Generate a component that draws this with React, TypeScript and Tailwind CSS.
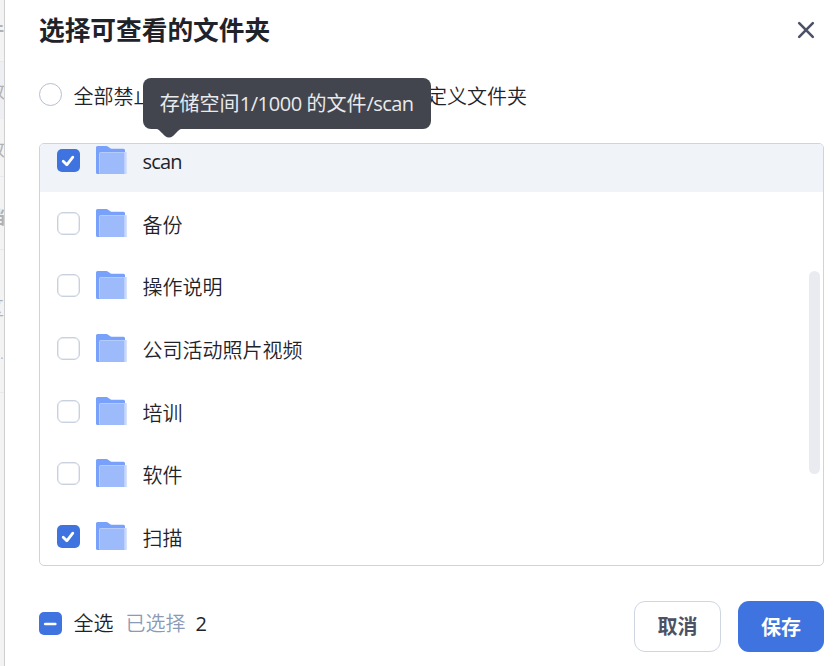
import React from 'react';

const FOLDERS = [
  { name: 'scan', checked: true, active: true },
  { name: '备份', checked: false },
  { name: '操作说明', checked: false },
  { name: '公司活动照片视频', checked: false },
  { name: '培训', checked: false },
  { name: '软件', checked: false },
  { name: '扫描', checked: true },
];

function Checkbox({ state }: { state: 'on' | 'off' | 'partial' }) {
  if (state === 'off') {
    return <span className="size-[23px] shrink-0 rounded-[6px] border border-[#c9d1de] bg-white shadow-[inset_0_0_0_0.5px_#d3dae5]" />;
  }
  return (
    <span className="flex size-[23px] shrink-0 items-center justify-center rounded-[5px] bg-[#3f73e0]">
      <svg width="23" height="23" viewBox="0 0 23 23" fill="none" stroke="#fff" strokeLinecap="round">
        {state === 'on' ? (
          <path d="M6.2 12.2L9.8 15.8L15.8 8.2" strokeWidth="2.8" strokeLinejoin="round" />
        ) : (
          <path d="M6.2 12H16.3" strokeWidth="2.6" />
        )}
      </svg>
    </span>
  );
}

function FolderIcon() {
  return (
    <svg width="32" height="29" viewBox="0 0 32 29" className="block shrink-0">
      <path d="M0 1.5A1.5 1.5 0 0 1 1.5 0H10.5c1.800 0 3 2.700 5 2.700H27.500a1.500 1.500 0 0 1 1.500 1.500V28H1.500A1.500 1.500 0 0 1 0 26.500Z" fill="#77a1fa" />
      <path d="M3 7.500A1.500 1.500 0 0 1 4.500 6H29V28H3Z" fill="#9dbafb" />
      <path d="M3.500 27V7.500a1 1 0 0 1 1-1H29" fill="none" stroke="#b5cbfc" />
      <path d="M28 6H29.500A1.500 1.500 0 0 1 31 7.500V26.500a1.500 1.500 0 0 1-1.500 1.500H28Z" fill="#bdd0fd" />
      <path d="M29.500 6A1.500 1.500 0 0 1 31 7.500V26.500a1.500 1.500 0 0 1-1.500 1.500Z" fill="#d5e1fe" />
    </svg>
  );
}

export default function App() {
  return (
    <div className="relative flex h-[666px] w-[836px] overflow-hidden bg-[#f3f3f4] font-['Open_Sans','Noto_Sans_CJK_SC',sans-serif] text-[20px] font-[350] text-[#1f2329]">
      {/* Dimmed page behind the dialog */}
      <div className="relative w-[5px] shrink-0 overflow-hidden border-r border-[#cfcfd0] text-[18px] leading-none text-[#b0b1b4]">
        <div className="absolute top-[61px] h-[58px] w-[5px] border-t border-[#e6e9f0] bg-[#eeeff2]" />
        <div className="absolute top-[176px] h-px w-[5px] bg-[#e6e9f0]" />
        <div className="absolute top-[249px] h-px w-[5px] bg-[#e6e9f0]" />
        <div className="absolute top-[392px] h-px w-[5px] bg-[#e6e9f0]" />
        <span className="absolute top-[21px] right-0 font-bold">件</span>
        <span className="absolute top-[82px] right-[-1px] font-normal">改</span>
        <span className="absolute top-[140px] right-[-1px] font-normal">改</span>
        <span className="absolute top-[208px] right-[-1px] font-bold">档</span>
        <span className="absolute top-[299px] right-0">区</span>
        <span className="absolute top-[343px] right-0">..</span>
      </div>

      <div className="flex grow flex-col bg-white pr-3 pl-[34px]">
        <div className="flex h-[62px] shrink-0 items-center justify-between">
          <h2 className="mt-px text-[25.7px] font-bold">选择可查看的文件夹</h2>
          <svg width="18" height="18" viewBox="0 0 18 18" className="mr-[9px] mb-[3px]" fill="none" stroke="#4b5268" strokeWidth="2.6" strokeLinecap="round">
            <path d="M2.200 2.200L15.800 15.800M15.800 2.200L2.200 15.800" />
          </svg>
        </div>

        <div className="relative flex h-[81px] shrink-0 items-start pt-[19px]">
          <label className="flex h-[30px] items-center gap-[11.5px]">
            <span className="mb-[3px] size-[23px] rounded-full border border-[#b4c0d3]" />
            <span className="mt-px">全部禁止</span>
          </label>
          <label className="ml-[219px] flex h-[30px] items-center gap-[11.5px] whitespace-nowrap">
            <span className="mb-[3px] size-[23px] rounded-full border border-[#b4c0d3]" />
            <span className="mt-px">自定义文件夹</span>
          </label>
          <div className="absolute top-4 left-[104px] z-10 flex h-[51px] w-[288px] items-center justify-center rounded-lg bg-[#42454d] pr-px font-normal whitespace-nowrap text-[#e9eaec]">
            <span>
              存储空间<span className="tracking-[-0.4px]">1/1000 </span>的文件<span className="tracking-[-0.6px]">/scan</span>
            </span>
            <svg width="34" height="10" viewBox="0 0 34 10" className="absolute top-[50px] left-[9px]" fill="#42454d">
              <path d="M0 0C6 0.500 7 2 10 5L13 8Q17 11 21 8L24 5C27 2 28 0.500 34 0Z" />
            </svg>
          </div>
        </div>

        <div className="relative flex h-[423px] shrink-0 flex-col justify-end overflow-hidden rounded-[5px] border border-[#ccd4e0]">
          <div className="-mb-[3px]">
            {FOLDERS.map((f) => (
              <div key={f.name} className={`flex h-[62.7px] items-center pl-[17px] ${f.active ? 'bg-[#f0f3f8]' : ''}`}>
                <Checkbox state={f.checked ? 'on' : 'off'} />
                <span className="ml-4"><FolderIcon /></span>
                <span className={f.active ? 'mt-[3px] ml-[14.5px] font-normal tracking-[-0.8px]' : 'mt-[5px] ml-[14.5px]'}>{f.name}</span>
              </div>
            ))}
          </div>
          <div className="absolute top-[127px] right-[3px] h-[203px] w-[11px] rounded-full bg-[#eaebf0]" />
        </div>

        <div className="flex h-[100px] shrink-0 items-end justify-between pb-[14px]">
          <div className="mb-[6px] flex h-[45px] items-center">
            <Checkbox state="partial" />
            <span className="mt-px ml-[11.5px]">全选</span>
            <span className="mt-px ml-3 text-[#8c9ab5]">已选择</span>
            <span className="ml-[10px] font-medium">2</span>
          </div>
          <div className="flex gap-[17px]">
            <button className="h-[51px] w-[87px] rounded-[11px] border border-[#cfd6e2] pt-px font-bold text-[#4b5268]">取消</button>
            <button className="h-[51px] w-[86px] rounded-[11px] bg-[#3f73e0] pt-[2px] font-bold text-white">保存</button>
          </div>
        </div>
      </div>
    </div>
  );
}
